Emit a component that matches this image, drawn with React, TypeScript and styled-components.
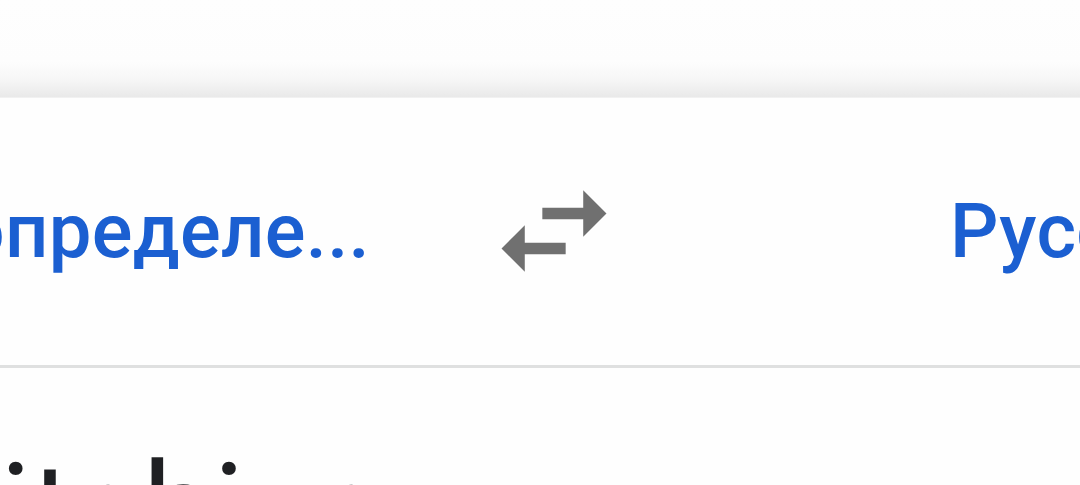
import React from "react";
import styled, { createGlobalStyle } from "styled-components";

const GlobalStyle = createGlobalStyle`
  html, body {
    margin: 0;
    padding: 0;
    background: #fefefe;
    overflow: hidden;
    width: 1080px;
    height: 485px;
  }
  body {
    font-family: Roboto, "Noto Sans", "Liberation Sans", sans-serif;
  }
`;

const Screen = styled.div`
  width: 1080px;
  height: 485px;
  display: flex;
  flex-direction: column;
  overflow: hidden;
  background: #fefefe;
`;

const TopArea = styled.div`
  flex: none;
  height: 97px;
  background: linear-gradient(
    to bottom,
    #fefefe 0px,
    #fdfdfd 62px,
    #f6f6f6 80px,
    #e9e9e9 97px
  );
  border-bottom: 1px solid #f1f1f1;
`;

const LanguageBar = styled.div`
  flex: none;
  height: 267px;
  display: flex;
  align-items: center;
  background: #fefefe;
  border-bottom: 3px solid #dfe0e0;
`;

const LangSlot = styled.div<{ $width?: number; $offset?: number; $align?: string }>`
  flex: none;
  ${(p) => (p.$width ? `width: ${p.$width}px;` : "")}
  margin-left: ${(p) => p.$offset ?? 0}px;
  display: flex;
  justify-content: ${(p) => p.$align ?? "flex-start"};
  white-space: nowrap;
`;

const LangLabel = styled.span`
  font-family: Roboto, "Noto Sans", sans-serif;
  font-weight: 500;
  font-size: 76px;
  line-height: 1.13;
  color: #1b5fd1;
  letter-spacing: 0.3px;
`;

const SwapButton = styled.div`
  flex: none;
  width: 140px;
  height: 140px;
  margin-left: 114px;
  margin-top: -2px;
  display: flex;
  align-items: center;
  justify-content: center;
  color: #707070;
`;

const SourceText = styled.div`
  flex: none;
  padding-top: 67px;
  font-family: Roboto, "Noto Sans", sans-serif;
  font-size: 128px;
  font-weight: 400;
  line-height: normal;
  color: #1f2023;
  white-space: nowrap;
`;

const SwapIcon = () => (
  <svg width="140" height="140" viewBox="0 0 24 24" fill="currentColor">
    <path d="M6.99 11L3 15l3.99 4v-3H14v-2H6.99v-3zM21 9l-3.99-4v3H10v2h7.01v3L21 9z" />
  </svg>
);

export default function App() {
  return (
    <>
      <GlobalStyle />
      <Screen>
        <TopArea />
        <LanguageBar>
          <LangSlot $width={370} $align="flex-end">
            <LangLabel>Автоопределе...</LangLabel>
          </LangSlot>
          <SwapButton>
            <SwapIcon />
          </SwapButton>
          <LangSlot $offset={326}>
            <LangLabel>Русский</LangLabel>
          </LangSlot>
        </LanguageBar>
        <SourceText>itahiga</SourceText>
      </Screen>
    </>
  );
}
